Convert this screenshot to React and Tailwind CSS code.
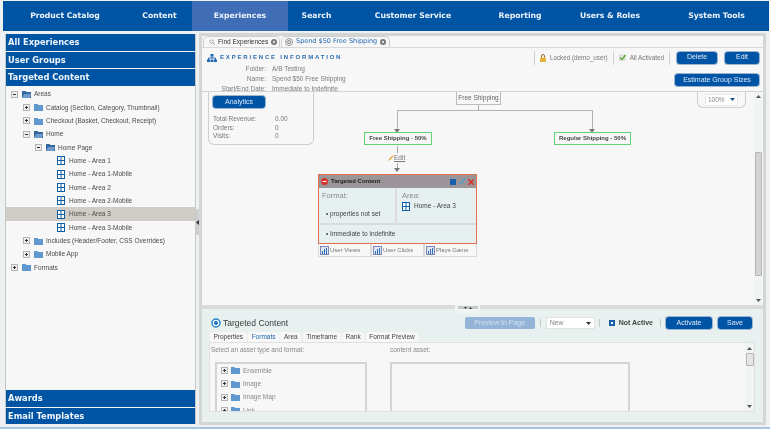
import React from 'react';

const navItems = [
  ['Product Catalog', 'w-[124px]'],
  ['Content', 'w-[65px]'],
  ['Experiences', 'w-[96px] bg-[#3f6eb6]'],
  ['Search', 'w-[57px]'],
  ['Customer Service', 'w-[136px]'],
  ['Reporting', 'w-[78px]'],
  ['Users & Roles', 'w-[102px]'],
  ['System Tools', 'w-[108px] pl-[3px]'],
];

// pad is the row indent, leaf rows get the grid icon instead of a folder
const treeRows = [
  { label: 'Areas', pad: 'pl-[5px]', toggle: '-', open: true },
  { label: 'Catalog (Section, Category, Thumbnail)', pad: 'pl-[17px]', toggle: '+' },
  { label: 'Checkout (Basket, Checkout, Receipt)', pad: 'pl-[17px]', toggle: '+' },
  { label: 'Home', pad: 'pl-[17px]', toggle: '-', open: true },
  { label: 'Home Page', pad: 'pl-[29px]', toggle: '-', open: true },
  { label: 'Home - Area 1', pad: 'pl-[51px]', leaf: true },
  { label: 'Home - Area 1-Mobile', pad: 'pl-[51px]', leaf: true },
  { label: 'Home - Area 2', pad: 'pl-[51px]', leaf: true },
  { label: 'Home - Area 2-Mobile', pad: 'pl-[51px]', leaf: true },
  { label: 'Home - Area 3', pad: 'pl-[51px]', leaf: true, selected: true },
  { label: 'Home - Area 3-Mobile', pad: 'pl-[51px]', leaf: true },
  { label: 'Includes (Header/Footer, CSS Overrides)', pad: 'pl-[17px]', toggle: '+' },
  { label: 'Mobile App', pad: 'pl-[17px]', toggle: '+' },
  { label: 'Formats', pad: 'pl-[5px]', toggle: '+' },
];

function Toggle({ sign }) {
  return (
    <svg width="7" height="7" viewBox="0 0 7 7" className="shrink-0">
      <rect x="0.5" y="0.5" width="6" height="6" fill="#eeeeee" stroke="#b4b4b4" />
      <path d="M2 3.5h3" stroke="#333" />
      {sign === '+' && <path d="M3.5 2v3" stroke="#333" />}
    </svg>
  );
}

function Folder({ open }) {
  return (
    <svg width="9" height="8" viewBox="0 0 9 8" className="shrink-0">
      <path d="M0 1h3.5l1 1H9v6H0z" fill={open ? '#35679f' : '#5f97cf'} />
      {open && <path d="M2 4h7L8 8H0z" fill="#6f9ccc" />}
    </svg>
  );
}

function GridIcon() {
  return (
    <svg width="8" height="9" viewBox="0 0 8 9" className="shrink-0">
      <rect width="8" height="9" fill="#0f5fa8" />
      <path d="M1 1h2.500v3H1zM4.500 1H7v3H4.500zM1 5h2.500v3H1zM4.500 5H7v3H4.500z" fill="#fff" />
    </svg>
  );
}

function Chart() {
  return (
    <svg width="9" height="9" viewBox="0 0 9 9" className="shrink-0">
      <rect x="0.5" y="0.5" width="8" height="8" fill="#dfe6f2" stroke="#7b86b5" />
      <path d="M2 8V5h1v3zM4 8V3h1v5zM6 8V2h1v6z" fill="#2a6fc0" />
    </svg>
  );
}

function CloseDot() {
  return (
    <svg width="6" height="6" viewBox="0 0 6 6" className="shrink-0">
      <circle cx="3" cy="3" r="3" fill="#777" />
      <circle cx="3" cy="3" r="1.200" fill="#ddd" />
    </svg>
  );
}

function BlueBtn({ className, children }) {
  return (
    <div className={`flex items-center justify-center rounded-[3px] bg-[#0054a6] text-[7px] text-[#dce8f5] shadow-[0_0_0_1px_#9db4cf] ${className}`}>
      {children}
    </div>
  );
}

function AccordionHead({ children }) {
  return (
    <div className="flex h-[16.500px] shrink-0 items-center bg-[#0054a4] pl-[2px] font-['DejaVu_Sans'] text-[8.300px] font-bold text-[#eef4fa]">
      {children}
    </div>
  );
}

function Sidebar() {
  return (
    <div className="flex h-[390px] w-[191px] shrink-0 flex-col gap-px border-x border-[#c4c8c8] bg-[#f7f7f7]">
      <AccordionHead>All Experiences</AccordionHead>
      <AccordionHead>User Groups</AccordionHead>
      <AccordionHead>Targeted Content</AccordionHead>
      <div className="flex-1 pt-px">
        {treeRows.map(row => (
          <div
            key={row.label}
            className={`flex h-[13.330px] items-center text-[6.500px] text-[#4a4a4a] ${row.pad} ${row.selected ? 'bg-[#cfcdc6]' : ''}`}
          >
            {row.leaf ? (
              <span className="mr-[4px]"><GridIcon /></span>
            ) : (
              <>
                <span className="mr-[4px]"><Toggle sign={row.toggle} /></span>
                <span className="mr-[3px]"><Folder open={row.open} /></span>
              </>
            )}
            <span className="whitespace-nowrap">{row.label}</span>
          </div>
        ))}
      </div>
      <AccordionHead>Awards</AccordionHead>
      <AccordionHead>Email Templates</AccordionHead>
    </div>
  );
}

function InfoLine({ label, value }) {
  return (
    <div className="flex h-[10px] items-center text-[6.500px] text-[#7c7c7c]">
      <span className="w-[59px] text-right">{label}</span>
      <span className="ml-[6px]">{value}</span>
    </div>
  );
}

function TabStrip() {
  return (
    <div className="flex h-[12px] shrink-0 items-end gap-px border-b border-[#d8d8d8] pl-px text-[6.500px]">
      <div className="flex h-[11px] w-[77px] items-center gap-[3px] rounded-t-[5px] border border-b-0 border-[#cfcfcf] bg-[#f7f7f7] pl-[5px]">
        <svg width="6" height="6" viewBox="0 0 7 7"><circle cx="3" cy="3" r="2" fill="#fff" stroke="#999" /><path d="M4.500 4.500L7 7" stroke="#999" /></svg>
        <span className="text-[#333]">Find Experiences</span>
        <CloseDot />
      </div>
      <div className="flex h-[11px] w-[109px] items-center gap-[3px] rounded-t-[5px] border border-b-0 border-[#cfcfcf] bg-[#f7f7f7] pl-[3px]">
        <svg width="8" height="8" viewBox="0 0 8 8"><circle cx="4" cy="4" r="3.500" fill="#eee" stroke="#999" /><circle cx="4" cy="4" r="1.500" fill="none" stroke="#888" /></svg>
        <span className="whitespace-nowrap font-['DejaVu_Sans'] text-[6.500px] text-[#1d66ad]">Spend $50 Free Shipping</span>
        <CloseDot />
      </div>
    </div>
  );
}

function InfoHeader() {
  return (
    <div className="flex h-[44px] shrink-0 border-b border-[#d4d4d4] pl-[5px] pr-[4px]">
      <div className="flex-1 pt-[3px]">
        <div className="flex h-[13px] items-center gap-[3px]">
          <svg width="10" height="8" viewBox="0 0 10 8">
            <path d="M5 2v2M1.500 6V4h7v2" stroke="#2c6cb0" fill="none" />
            <rect x="3.500" y="0" width="3" height="2.500" fill="#1f68b2" />
            <rect x="0" y="5.500" width="3" height="2.500" fill="#1f68b2" />
            <rect x="3.500" y="5.500" width="3" height="2.500" fill="#1f68b2" />
            <rect x="7" y="5.500" width="3" height="2.500" fill="#1f68b2" />
          </svg>
          <span className="text-[6px] font-bold tracking-[1.820px] text-[#2b6cae]">EXPERIENCE INFORMATION</span>
        </div>
        <InfoLine label="Folder:" value="A/B Testing" />
        <InfoLine label="Name:" value="Spend $50 Free Shipping" />
        <InfoLine label="Start/End Date:" value="Immediate to Indefinite" />
      </div>
      <div className="flex w-[232px] flex-col items-end">
        <div className="flex h-[19px] items-center text-[6.300px] text-[#777]">
          <div className="flex h-[14px] items-center gap-[3px] border-x border-[#d0d0d0] px-[5px]">
            <svg width="6" height="8" viewBox="0 0 6 8"><path d="M1.500 3.500V2a1.500 1.500 0 013 0v1.500" fill="none" stroke="#8a6d3b" /><rect y="3.500" width="6" height="4.500" fill="#e4b23a" /></svg>
            <span className="ml-[1px]">Locked (demo_user)</span>
          </div>
          <div className="flex h-[14px] items-center gap-[3px] border-r border-[#d0d0d0] px-[5px]">
            <svg width="7" height="7" viewBox="0 0 7 7"><rect y="1" width="6" height="6" fill="#e8e8e8" stroke="#bbb" strokeWidth="0.500" /><path d="M1 3.500L3 5.500L6.500 1" fill="none" stroke="#5aa632" strokeWidth="1.300" /></svg>
            <span className="ml-[1px]">All Activated</span>
          </div>
          <BlueBtn className="ml-[7px] h-[12px] w-[40px]">Delete</BlueBtn>
          <BlueBtn className="ml-[8px] h-[12px] w-[34px]">Edit</BlueBtn>
        </div>
        <BlueBtn className="mt-[7px] h-[12px] w-[84px]">Estimate Group Sizes</BlueBtn>
      </div>
    </div>
  );
}

function Arrow({ className }) {
  return (
    <svg width="6" height="4" viewBox="0 0 6 4" className={`absolute ${className}`}>
      <path d="M0 0h6L3 4z" fill="#777" />
    </svg>
  );
}

function ContentCard() {
  return (
    <div className="absolute left-[116px] top-[82px] w-[159px]">
      <div className="border border-[#e0714f] bg-[#e7f0f0]">
        <div className="flex h-[13px] items-center bg-[#9b9499] px-[2px]">
          <svg width="7" height="7" viewBox="0 0 7 7"><circle cx="3.500" cy="3.500" r="3.500" fill="#d8322c" /><path d="M1.500 3.500h4" stroke="#fff" /></svg>
          <span className="ml-[3px] flex-1 text-[6px] font-bold text-[#222]">Targeted Content</span>
          <span className="mr-[3px] h-[6px] w-[6px] bg-[#1560a8]" />
          <svg width="7" height="7" viewBox="0 0 7 7" className="mr-[2px]"><path d="M1 6L6 1" stroke="#4a9bdc" strokeWidth="1.500" /></svg>
          <svg width="6" height="6" viewBox="0 0 6 6"><path d="M0 0L6 6M6 0L0 6" stroke="#d8322c" strokeWidth="1.500" /></svg>
        </div>
        <div className="flex h-[37px] border-b-2 border-[#dcdcdc]">
          <div className="w-[78px] border-r-2 border-[#dcdcdc] pl-[3px] pt-[2px] text-[7.500px] text-[#8a8a8a]">
            <div>Format:</div>
            <div className="mt-[8px] pl-[4px] text-[6.500px] text-[#444]">• properties not set</div>
          </div>
          <div className="pl-[5px] pt-[2px] text-[7.500px] text-[#8a8a8a]">
            <div>Area:</div>
            <div className="flex items-center gap-[4px] text-[6.500px] text-[#444]"><GridIcon />Home - Area 3</div>
          </div>
        </div>
        <div className="flex h-[18px] items-center pl-[7px] text-[6.500px] text-[#444]">• Immediate to indefinite</div>
      </div>
      <div className="flex h-[13px] text-[6px] text-[#777]">
        {['User Views', 'User Clicks', 'Plays Game'].map(name => (
          <div key={name} className="flex flex-1 items-center gap-px border border-t-0 border-[#dadada] pl-px">
            <Chart />{name}
          </div>
        ))}
      </div>
    </div>
  );
}

function Canvas() {
  return (
    <div className="relative flex-1 overflow-hidden bg-[#f7f7f7]">
      <div className="absolute left-[6px] top-0 h-[53px] w-[106px] rounded-b-[6px] border border-t-0 border-[#cfcfcf] px-[4px] pt-[4px] text-[6.500px] text-[#777]">
        <BlueBtn className="h-[12px] w-[52px]">Analytics</BlueBtn>
        <div className="mt-[7px] flex h-[8.400px] items-center"><span className="w-[62px]">Total Revenue:</span>0.00</div>
        <div className="flex h-[8.400px] items-center"><span className="w-[62px]">Orders:</span>0</div>
        <div className="flex h-[8.400px] items-center"><span className="w-[62px]">Visits:</span>0</div>
      </div>

      <div className="absolute left-[254px] top-0 flex h-[13px] w-[45px] items-center justify-center border border-t-0 border-[#bdbdbd] text-[6.500px] text-[#666]">Free Shipping</div>
      <div className="absolute left-[276px] top-[13px] h-[5px] w-px bg-[#aaa]" />
      <div className="absolute left-[195px] top-[18px] h-[21px] w-[196px] border border-b-0 border-[#b5b0b5]" />
      <Arrow className="left-[192px] top-[37px]" />
      <Arrow className="left-[387px] top-[37px]" />
      <div className="absolute left-[162px] top-[40px] flex h-[13px] w-[68px] items-center justify-center border border-[#62d074] text-[6px] font-bold text-[#444]">Free Shipping - 50%</div>
      <div className="absolute left-[352px] top-[40px] flex h-[13px] w-[77px] items-center justify-center border border-[#62d074] text-[6px] font-bold text-[#444]">Regular Shipping - 50%</div>
      <div className="absolute left-[195px] top-[54px] h-[7px] w-px bg-[#aaa]" />
      <div className="absolute left-[186px] top-[61px] flex items-center text-[6.500px] text-[#777] underline">
        <svg width="6" height="6" viewBox="0 0 6 6"><path d="M0 6L1 4L4.500 0.500L5.500 1.500L2 5z" fill="#e5a92f" /></svg>
        Edit
      </div>
      <div className="absolute left-[195px] top-[71px] h-[6px] w-px bg-[#aaa]" />
      <Arrow className="left-[192px] top-[76px]" />
      <ContentCard />

      <div className="absolute left-[495px] top-0 flex h-[16px] w-[49px] items-center justify-center rounded-b-[6px] border border-t-0 border-[#cfcfcf]">
        <div className="flex h-[12px] w-[33px] items-center justify-between border border-[#e8e8e8] bg-white px-[2px] text-[6.500px] text-[#888]">
          100%
          <svg width="5" height="3" viewBox="0 0 5 3"><path d="M0 0h5L2.500 3z" fill="#1b4f8a" /></svg>
        </div>
      </div>

      <div className="absolute right-px top-0 flex h-full w-[8px] flex-col items-center bg-[#f1f4f4]">
        <svg width="5" height="3" viewBox="0 0 5 3" className="mt-[3px]"><path d="M2.500 0L5 3H0z" fill="#555" /></svg>
        <div className="mt-[54px] h-[124px] w-[7px] rounded-[1px] border border-[#b5b5b5] bg-[#d6d3d6]" />
        <svg width="5" height="3" viewBox="0 0 5 3" className="absolute bottom-[3px]"><path d="M0 0h5L2.500 3z" fill="#555" /></svg>
      </div>
    </div>
  );
}

function AssetRow({ label }) {
  return (
    <div className="flex h-[13.330px] items-center pl-[4px] text-[6.500px] text-[#888]">
      <span className="mr-[3px]"><Toggle sign="+" /></span>
      <span className="mr-[3px]"><Folder /></span>
      {label}
    </div>
  );
}

function BottomPanel() {
  const tabs = ['Properties', 'Formats', 'Area', 'Timeframe', 'Rank', 'Format Preview'];
  return (
    <div className="relative flex h-[117px] shrink-0 flex-col border-t-[4px] border-[#dbdadb] bg-[#e8f0f0] px-[7px]">
      <div className="absolute -top-[4px] left-[253px] flex h-[8px] w-[25px] items-start justify-center bg-[#f1f4f4] pt-[1px]">
        <div className="flex h-[3px] w-[20px] items-center justify-center gap-[2px] bg-[#c9c9c9]">
          <svg width="3" height="2" viewBox="0 0 3 2"><path d="M0 0h3L1.500 2z" fill="#333" /></svg>
          <svg width="3" height="2" viewBox="0 0 3 2"><path d="M1.500 0L3 2H0z" fill="#333" /></svg>
        </div>
      </div>

      <div className="flex h-[23px] shrink-0 items-center pt-[5px]">
        <svg width="10" height="10" viewBox="0 0 10 10" className="ml-[2px]">
          <circle cx="5" cy="5" r="4" fill="#fff" stroke="#2283d3" strokeWidth="1.500" />
          <circle cx="5" cy="5" r="2" fill="#1571c4" />
        </svg>
        <span className="ml-[2px] flex-1 text-[8.500px] text-[#3a3a3a]">Targeted Content</span>
        <div className="flex h-[12px] w-[70px] items-center justify-center rounded-[2px] bg-[#94b4d8] text-[7px] text-[#d3e0ee]">Preview In Page</div>
        <div className="mx-[5px] h-[8px] w-px bg-[#c8c8c8]" />
        <div className="flex h-[12px] w-[49px] items-center justify-between border border-[#e2e2e2] bg-white px-[3px] text-[7px] text-[#888]">
          New
          <svg width="5" height="3" viewBox="0 0 5 3"><path d="M0 0h5L2.500 3z" fill="#333" /></svg>
        </div>
        <div className="ml-[4px] mr-[9px] h-[8px] w-px bg-[#c8c8c8]" />
        <span className="flex h-[6px] w-[6px] items-center justify-center bg-[#1560a8]"><span className="h-[2px] w-[2px] bg-white" /></span>
        <span className="ml-[4px] text-[7px] font-bold text-[#444]">Not Active</span>
        <div className="ml-[7px] mr-[5px] h-[8px] w-px bg-[#c8c8c8]" />
        <BlueBtn className="h-[12px] w-[46px]">Activate</BlueBtn>
        <BlueBtn className="ml-[6px] mr-[4px] h-[12px] w-[34px]">Save</BlueBtn>
      </div>

      <div className="flex h-[10px] shrink-0 items-end gap-[1.500px] pl-px text-[6.500px] text-[#444]">
        {tabs.map(tab => (
          <div key={tab} className={`flex h-[10px] items-center rounded-t-[4px] bg-[#f7f7f7] px-[3.500px] ${tab === 'Formats' ? 'text-[#1d66ad]' : ''}`}>{tab}</div>
        ))}
      </div>

      <div className="relative flex h-[70px] w-[546px] shrink-0 overflow-hidden border border-[#e0e0e0] bg-[#f7f7f7] text-[6.500px] text-[#888]">
        <div className="w-[180px] shrink-0 pl-px pt-[2px]">
          Select an asset type and format:
          <div className="ml-[4px] mt-[7px] h-[60px] w-[152px] border-2 border-[#d4d4d4]">
            <AssetRow label="Ensemble" />
            <AssetRow label="Image" />
            <AssetRow label="Image Map" />
            <AssetRow label="Link" />
          </div>
        </div>
        <div className="pt-[2px]">
          content asset:
          <div className="mt-[7px] h-[60px] w-[240px] border-2 border-[#d4d4d4]" />
        </div>
        <div className="absolute right-0 top-0 flex h-full w-[9px] flex-col items-center bg-[#f1f4f4]">
          <svg width="5" height="3" viewBox="0 0 5 3" className="mt-[4px]"><path d="M2.500 0L5 3H0z" fill="#555" /></svg>
          <div className="mt-[3px] h-[13px] w-[8px] rounded-[1px] border border-[#b5b5b5] bg-[#e4e4e4]" />
          <svg width="5" height="3" viewBox="0 0 5 3" className="absolute bottom-[3px]"><path d="M0 0h5L2.500 3z" fill="#555" /></svg>
        </div>
      </div>
    </div>
  );
}

export default function App() {
  return (
    <div className="flex h-[429px] w-[770px] flex-col overflow-hidden bg-[#eef1f1] pl-[3px] font-['Liberation_Sans',sans-serif] blur-[0.3px]">
      <div className="mt-px flex h-[30px] w-[766px] shrink-0 bg-[#0054a4] font-['DejaVu_Sans'] text-[7.700px] font-bold text-[#eef4fa]">
        {navItems.map(([name, cls]) => (
          <div key={name} className={`flex items-center justify-center whitespace-nowrap ${cls}`}>{name}</div>
        ))}
      </div>
      <div className="mt-[3px] flex pl-[2px]">
        <Sidebar />
        <div className="w-[3px] shrink-0 pt-[175px]">
          <div className="flex h-[26px] items-center justify-center bg-[#cfcfcf]">
            <svg width="3" height="5" viewBox="0 0 3 5"><path d="M3 0v5L0 2.500z" fill="#333" /></svg>
          </div>
        </div>
        <div className="-mt-px flex h-[392px] w-[567px] flex-col border-[3px] border-[#d4d6d6] bg-[#f7f7f7]">
          <TabStrip />
          <InfoHeader />
          <Canvas />
          <BottomPanel />
        </div>
      </div>
      <div className="-ml-[3px] mt-[2px] h-[2px] shrink-0 bg-[#a8c4de]" />
    </div>
  );
}
